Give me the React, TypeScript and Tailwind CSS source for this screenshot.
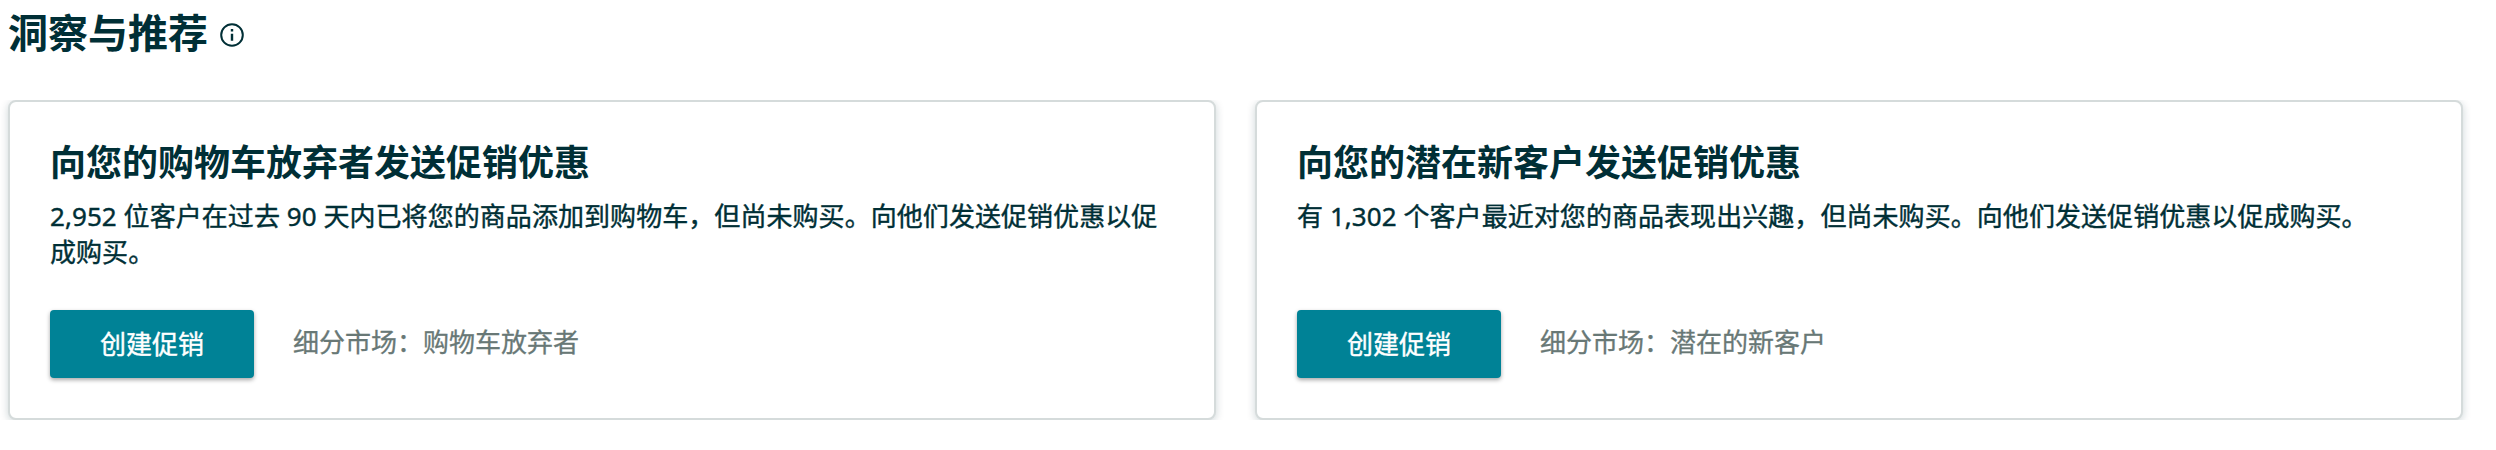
const cards = [
  {
    title: "向您的购物车放弃者发送促销优惠",
    body: "2,952 位客户在过去 90 天内已将您的商品添加到购物车，但尚未购买。向他们发送促销优惠以促成购买。",
    segment: "购物车放弃者",
  },
  {
    title: "向您的潜在新客户发送促销优惠",
    body: "有 1,302 个客户最近对您的商品表现出兴趣，但尚未购买。向他们发送促销优惠以促成购买。",
    segment: "潜在的新客户",
  },
];

function InfoIcon() {
  return (
    <svg viewBox="0 0 24 24" className="mt-1 size-6" fill="none">
      <circle cx="12" cy="12" r="10.8" stroke="#002f36" strokeWidth="2" />
      <path d="M12 6v2.6M12 10.8v7" stroke="#002f36" strokeWidth="2.4" />
    </svg>
  );
}

export default function App() {
  return (
    <div
      lang="zh-CN"
      className="h-[450px] w-[2496px] overflow-hidden bg-white font-['Noto_Sans','Noto_Sans_CJK_SC',sans-serif] text-[#002f36]"
    >
      <header className="flex h-[100px] items-start gap-3 pl-2 pt-[3px]">
        <h1 className="text-[40px] font-bold leading-[60px]">洞察与推荐</h1>
        <div className="flex h-[60px] items-center">
          <InfoIcon />
        </div>
      </header>

      <main className="flex h-80 gap-[39px] overflow-hidden pl-2">
        {cards.map((card) => (
          <section
            key={card.title}
            className="flex w-[1208px] flex-col rounded-lg border-2 border-[#d5dbdb] bg-white px-10 pb-10 pt-[35px] shadow-[0_2px_8px_rgba(0,47,54,0.2)]"
          >
            <h2 className="text-4xl font-bold leading-[52px]">{card.title}</h2>
            <p className="mt-[9px] text-[26px] leading-9 tracking-[0.06px] [-webkit-text-stroke:0.4px]">{card.body}</p>
            <div className="mt-auto flex items-center gap-[39px]">
              <button className="h-[68px] w-[204px] rounded bg-[#008296] text-[26px] text-white shadow-[0_2px_4px_rgba(0,0,0,0.35)] [-webkit-text-stroke:0.4px]">
                创建促销
              </button>
              <span className="pb-[3px] text-[26px] text-[#687876] [-webkit-text-stroke:0.3px]">
                细分市场：{card.segment}
              </span>
            </div>
          </section>
        ))}
      </main>
    </div>
  );
}
